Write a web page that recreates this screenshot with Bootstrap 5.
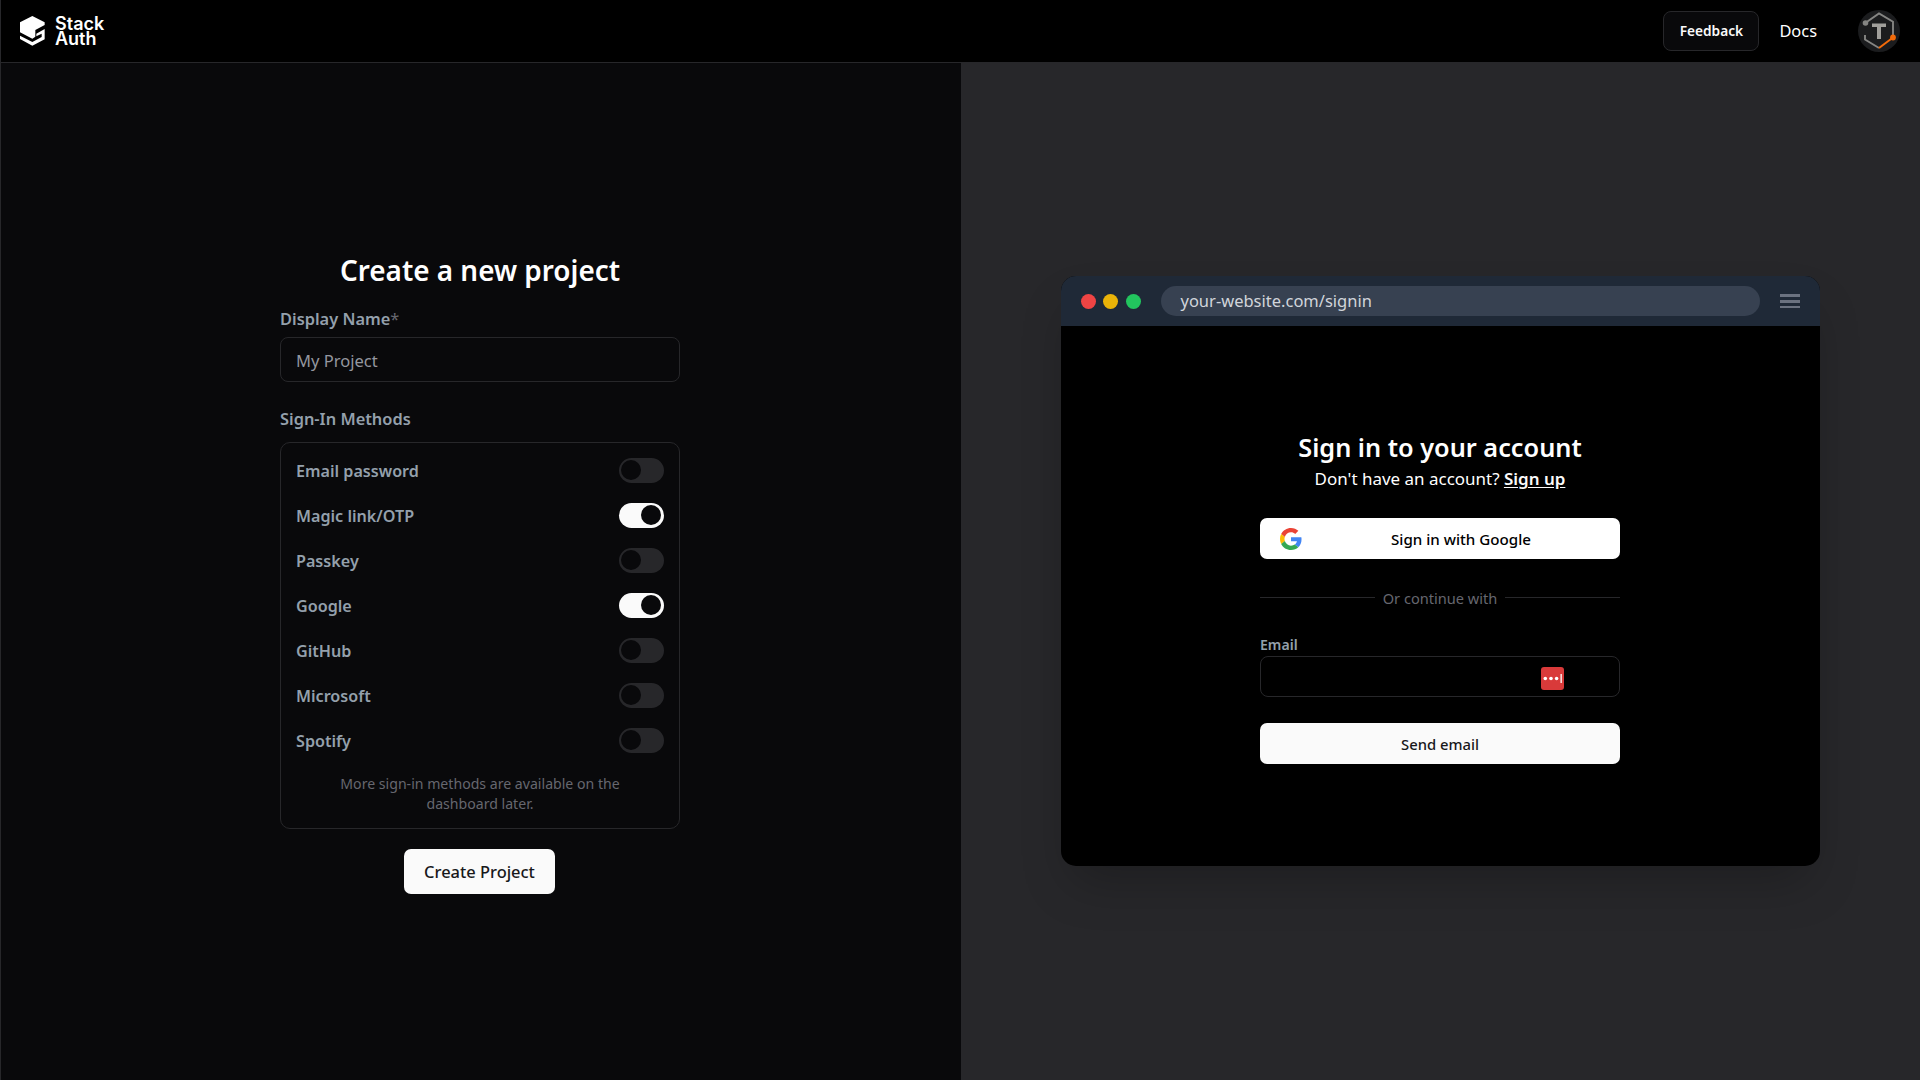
<!DOCTYPE html>
<html lang="en" data-bs-theme="dark">
<head>
<meta charset="utf-8">
<meta name="viewport" content="width=device-width, initial-scale=1">
<title>Stack Auth</title>
<link href="https://cdn.jsdelivr.net/npm/bootstrap@5.3.0/dist/css/bootstrap.min.css" rel="stylesheet">
<style>
  body { font-family: "Noto Sans", sans-serif; background: #09090b; color: #fff; height: 100vh; overflow: hidden; }
  .page { border-left: 1px solid #27272a; }
  .topbar { height: 63px; background: #000; border-bottom: 1px solid #27272a; padding: 0 20px 0 19px; }
  .brand-name { font: 600 18px/15px Inter, sans-serif; margin-left: 10px; }
  .btn-feedback { width: 96px; height: 40px; background: #09090b; border: 1px solid #27272a; border-radius: 8px; font-size: 13.7px; font-weight: 600; color: #fafafa; padding: 1px 0 0; }
  .docs-link { font-size: 16.4px; margin: 1px 41px 0 20px; }
  .pane-left { width: 960px; background: #09090b; padding: 189px 2px 0 0; }
  .pane-right { background: #27272a; padding-top: 213px; }
  .project-form { width: 400px; }
  .form-title { font-size: 27.9px; line-height: 36px; font-weight: 600; margin-bottom: 20px; }
  .field-label { font-size: 16.4px; line-height: 22px; font-weight: 600; color: #94a0ac; }
  .field-box { height: 45px; background: transparent; border: 1px solid #27272a; border-radius: 8px; font-size: 16.55px; padding: 1px 15px 0; color: #fff; margin: 7px 0 26px; }
  .field-box::placeholder { color: #94979f; opacity: 1; }
  .methods { border: 1px solid #27272a; border-radius: 10px; padding: 15px; margin-top: 12px; }
  .method-row { height: 25px; margin-bottom: 20px; font-size: 16.15px; }
  .required-mark { color: #66676f; }
  .toggle { width: 45px; height: 25px; border-radius: 13px; background: #27272a; padding: 2px; }
  .toggle i { width: 20px; height: 20px; border-radius: 50%; background: #09090b; }
  .toggle.on { background: #fafafa; }
  .toggle.on i { margin-left: 20px; }
  .note { font-size: 14.12px; line-height: 20px; color: #66676f; padding-top: 1px; margin-bottom: -1px; }
  .btn-create { width: 151px; height: 45px; margin: 20px 1px 0 0; background: #fafafa; color: #18181b; border: 0; border-radius: 7px; font-size: 16.45px; font-weight: 500; padding: 2px 0 0; }
  .browser { width: 759px; height: 590px; border-radius: 15px; background: #000; box-shadow: 0 25px 50px -12px rgba(0,0,0,.25); margin-left: 100px; }
  .browser-bar { height: 50px; background: #1f2937; padding: 0 20px; }
  .dot { width: 15px; height: 15px; border-radius: 50%; margin-right: 7.4px; }
  .url { height: 30px; border-radius: 15px; background: #374151; color: #d1d5db; font-size: 16.5px; line-height: 30px; padding-left: 19.500px; margin: 0 20px 0 12.8px; }
  .signin { width: 360px; padding-top: 106px; margin-left: 199px; }
  .signin-title { font-size: 25.3px; line-height: 30px; font-weight: 600; margin: 0 -20px 5px; }
  .signin-sub { font-size: 16.98px; line-height: 24px; margin-bottom: 27px; }
  .signin-sub a { color: #fafafa; font-weight: 600; text-underline-offset: 2px; }
  .btn-wide { height: 41px; border: 0; border-radius: 7px; font-size: 15.15px; font-weight: 500; color: #000; background: #fff; padding: 2px 0 0; }
  .btn-google { padding: 0 20px; }
  .btn-google span { padding-top: 2px; margin-left: 20px; }
  .rule { height: 1px; background: #27272a; margin-bottom: 2px; }
  .divider { margin: 28px 0 26px; font-size: 14.6px; line-height: 22px; color: #66676f; }
  .email-label { font-size: 14.1px; line-height: 20px; font-weight: 600; color: #94a0ac; margin-bottom: 1px; }
  .email-box { height: 41px; border: 1px solid #27272a; border-radius: 8px; padding: 3px 55px 0 0; margin-bottom: 26px; }
  .btn-send { background: #fafafa; color: #18181b; font-size: 14.8px; }
</style>
</head>
<body>
<div class="page d-flex flex-column vh-100">
  <header class="topbar d-flex align-items-center flex-shrink-0">
    <svg width="25" height="30" viewBox="0 0 75 90" fill="#fff"><path d="M37 0 74 19v8L46 42v20l-9 6L0 49V19z"/><path d="M0 59l37 19 28-15V53l-16 8V53l25-14v31L37 89 0 69z"/></svg>
    <div class="brand-name">Stack<br>Auth</div>
    <div class="ms-auto d-flex align-items-center">
      <button class="btn btn-feedback">Feedback</button>
      <span class="docs-link">Docs</span>
      <svg width="42" height="42" viewBox="0 0 42 42" fill="none"><circle cx="21" cy="21" r="21" fill="#1b1c1e"/><path d="M8 12.5 21 3.500l14 8.300V26M7 25v4.500l14 8.500" stroke="#858583" stroke-width="1.900"/><path d="M21 38l14-10.500" stroke="#f36b0a" stroke-width="2"/><circle cx="7.500" cy="13" r="2.800" fill="#858583"/><circle cx="35" cy="27.500" r="2.900" fill="#f36b0a"/><path d="M14 13.500h14v3.500h-5V29h-4V17h-5z" fill="#a09f9b"/></svg>
    </div>
  </header>
  <main class="d-flex flex-grow-1">
    <section class="pane-left">
      <div class="project-form mx-auto">
        <h1 class="form-title text-center">Create a new project</h1>
        <div class="field-label">Display Name<span class="required-mark fw-normal">*</span></div>
        <input class="form-control field-box" placeholder="My Project">
        <div class="field-label">Sign-In Methods</div>
        <div class="methods">
          <div class="method-row field-label d-flex align-items-center justify-content-between">Email password<span class="toggle d-flex"><i></i></span></div>
          <div class="method-row field-label d-flex align-items-center justify-content-between">Magic link/OTP<span class="toggle on d-flex"><i></i></span></div>
          <div class="method-row field-label d-flex align-items-center justify-content-between">Passkey<span class="toggle d-flex"><i></i></span></div>
          <div class="method-row field-label d-flex align-items-center justify-content-between">Google<span class="toggle on d-flex"><i></i></span></div>
          <div class="method-row field-label d-flex align-items-center justify-content-between">GitHub<span class="toggle d-flex"><i></i></span></div>
          <div class="method-row field-label d-flex align-items-center justify-content-between">Microsoft<span class="toggle d-flex"><i></i></span></div>
          <div class="method-row field-label d-flex align-items-center justify-content-between">Spotify<span class="toggle d-flex"><i></i></span></div>
          <div class="note text-center">More sign-in methods are available on the<br>dashboard later.</div>
        </div>
        <div class="text-center"><button class="btn btn-create">Create Project</button></div>
      </div>
    </section>
    <section class="pane-right flex-grow-1">
      <div class="browser overflow-hidden">
        <div class="browser-bar d-flex align-items-center">
          <span class="dot" style="background:#ef4444"></span>
          <span class="dot" style="background:#eab308"></span>
          <span class="dot" style="background:#22c55e"></span>
          <div class="url flex-grow-1">your-website.com/signin</div>
          <svg width="20" height="15" viewBox="0 0 20 15" fill="#6b7280"><path d="M0 0h20v3H0zM0 6h20v3H0zM0 12h20v2H0z"/></svg>
        </div>
        <div class="signin">
          <h2 class="signin-title text-center">Sign in to your account</h2>
          <p class="signin-sub text-center">Don't have an account? <a href="#">Sign up</a></p>
          <button class="btn btn-wide btn-google w-100 d-flex align-items-center">
            <svg width="22" height="22" viewBox="0 0 48 48"><path fill="#EA4335" d="M24 9.500c3.540 0 6.710 1.220 9.210 3.600l6.850-6.850C35.900 2.380 30.470 0 24 0 14.620 0 6.510 5.380 2.560 13.220l7.980 6.190C12.430 13.720 17.740 9.500 24 9.500z"/><path fill="#4285F4" d="M46.980 24.550c0-1.570-.15-3.090-.38-4.550H24v9.020h12.940c-.58 2.960-2.260 5.480-4.780 7.180l7.730 6c4.510-4.180 7.090-10.360 7.090-17.650z"/><path fill="#FBBC05" d="M10.530 28.590c-.48-1.450-.76-2.990-.76-4.590s.27-3.140.76-4.590l-7.980-6.190C.92 16.460 0 20.120 0 24c0 3.880.92 7.540 2.560 10.780l7.970-6.190z"/><path fill="#34A853" d="M24 48c6.480 0 11.930-2.130 15.890-5.810l-7.730-6c-2.150 1.450-4.920 2.300-8.160 2.300-6.260 0-11.570-4.220-13.470-9.910l-7.980 6.190C6.510 42.620 14.620 48 24 48z"/></svg>
            <span class="flex-grow-1 text-center">Sign in with Google</span>
          </button>
          <div class="divider d-flex align-items-center">
            <span class="rule flex-grow-1"></span><span class="px-2">Or continue with</span><span class="rule flex-grow-1"></span>
          </div>
          <div class="email-label">Email</div>
          <div class="email-box d-flex align-items-center justify-content-end">
            <svg width="23" height="23" viewBox="0 0 23 23"><rect width="23" height="23" rx="3" fill="#d93a3a"/><g fill="#fff"><circle cx="4.300" cy="11.500" r="1.800"/><circle cx="10" cy="11.500" r="1.800"/><circle cx="15.600" cy="11.500" r="1.800"/><path d="M19.500 7h1.300v9h-1.300z"/></g></svg>
          </div>
          <button class="btn btn-wide btn-send w-100">Send email</button>
        </div>
      </div>
    </section>
  </main>
</div>
<script src="https://cdn.jsdelivr.net/npm/bootstrap@5.3.0/dist/js/bootstrap.bundle.min.js"></script>
</body>
</html>
